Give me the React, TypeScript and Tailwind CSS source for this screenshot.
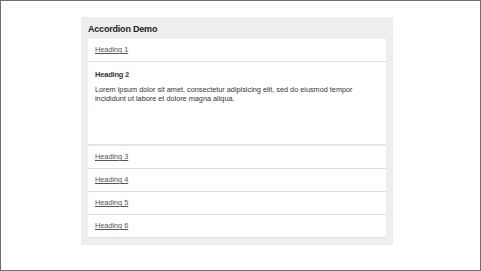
import React, { useState } from "react";

const headings = ["Heading 1", "Heading 2", "Heading 3", "Heading 4", "Heading 5", "Heading 6"];

const App: React.FC = () => {
  const [open, setOpen] = useState(1);

  return (
    <div
      className="w-[481px] h-[271px] border border-[#6e6e6e] bg-white overflow-hidden"
      style={{ fontFamily: '"Liberation Sans", Arial, sans-serif' }}
    >
      <div className="ml-[80px] mt-[16px] w-[312px] bg-[#eeeeee] px-[7px] pb-[7px]">
        <h2 className="h-[22px] pt-[6px] text-[9px] leading-[12px] font-bold text-[#222] tracking-[-0.2px]">
          Accordion Demo
        </h2>
        <div className="bg-white">
          {headings.map((h, i) =>
            i === open ? (
              <div key={h} className="h-[84px] border-b-2 border-[#e6e6e6] px-[7px] pt-[8px]">
                <div className="text-[7.5px] leading-[10px] font-bold text-[#333] tracking-[-0.2px]">{h}</div>
                <p className="mt-[5px] text-[7.3px] leading-[9px] text-[#333] w-[262px]">
                  Lorem ipsum dolor sit amet, consectetur adipisicing elit, sed do eiusmod tempor incididunt ut labore et
                  dolore magna aliqua.
                </p>
              </div>
            ) : (
              <div key={h} className="h-[23px] border-b border-[#dddddd] px-[7px] flex items-center">
                <a
                  href="#"
                  onClick={(e) => {
                    e.preventDefault();
                    setOpen(i);
                  }}
                  className="text-[7.3px] leading-[10px] text-[#555] underline"
                >
                  {h}
                </a>
              </div>
            )
          )}
        </div>
      </div>
    </div>
  );
};

export default App;
